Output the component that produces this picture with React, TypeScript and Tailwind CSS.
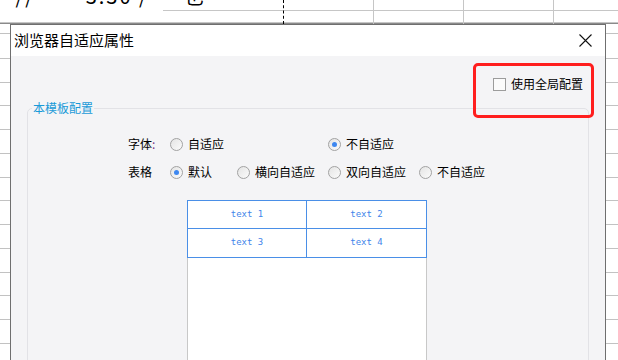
import React from "react";

const hLinesSide = [33, 58, 82, 105, 129, 153, 177, 200, 224, 248, 272, 295, 319, 343];

function Radio({ checked }: { checked?: boolean }) {
  return (
    <span className="relative flex h-[13px] w-[13px] shrink-0 items-center justify-center rounded-full border border-[#a2a2a2] bg-gradient-to-br from-[#e4e4e4] to-[#fbfbfb]">
      {checked && <span className="h-[5px] w-[5px] rounded-full bg-[#3d87f0]" />}
    </span>
  );
}

function Opt({ label, checked, w }: { label: string; checked?: boolean; w: string }) {
  return (
    <div className={`flex items-center gap-[5px] ${w}`}>
      <Radio checked={checked} />
      <span>{label}</span>
    </div>
  );
}

export default function App() {
  const font = { fontFamily: '"Noto Sans CJK SC", "Noto Sans", sans-serif' };
  return (
    <div className="relative h-[360px] w-[618px] overflow-hidden bg-white" style={font}>
      {/* background spreadsheet */}
      <div className="absolute left-[10px] top-[-14px] text-[20px] leading-none text-black tracking-[2px]">
        <span>ʼ//·· 3.30 / · 也</span>
      </div>
      <div className="absolute left-[163px] right-0 top-[10px] h-px bg-[#c6c6c6]" />
      <div className="absolute left-0 right-0 top-[22px] h-px bg-[#c6c6c6]" />
      <div className="absolute left-0 right-0 top-[23px] h-px bg-[#8a8a8a]" />
      <div className="absolute top-0 h-[24px] left-[283px] w-px border-l border-dashed border-black" />
      <div className="absolute top-0 h-[24px] left-[373px] w-px bg-[#c6c6c6]" />
      <div className="absolute top-0 h-[24px] left-[463px] w-px bg-[#c6c6c6]" />
      <div className="absolute top-0 h-[24px] left-[553px] w-px bg-[#c6c6c6]" />
      {hLinesSide.map((y) => (
        <div key={y} className="absolute left-0 right-0 h-px bg-[#c2c2c2]" style={{ top: y }} />
      ))}

      {/* dialog window */}
      <div className="absolute left-[10px] top-[24px] flex h-[360px] w-[596px] flex-col border border-[#6f6f6f] bg-[#f4f4f6]">
        <div className="flex h-[31px] shrink-0 items-center justify-between bg-white pl-[3px] pr-[13px]">
          <span className="text-[15px] text-black">浏览器自适应属性</span>
          <svg width="13" height="13" viewBox="0 0 13 13">
            <path d="M0.5 0.5 L12.5 12.5 M12.5 0.5 L0.5 12.5" stroke="#111" strokeWidth="1.1" />
          </svg>
        </div>
        <div className="flex flex-col px-[16px] pt-[21px] text-[12px] text-black">
          <div className="flex h-[14px] items-center justify-end gap-[5px] pr-[6px]">
            <span className="h-[13px] w-[13px] border border-[#9c9c9c] bg-[#fbfbfb]" />
            <span>使用全局配置</span>
          </div>
          <fieldset className="mt-[8px] h-[300px] rounded-[5px] border border-[#e2e2e6] pl-[100px]">
            <legend className="ml-[-96px] px-[1px] text-[12px] text-[#1a9ad8]">本模板配置</legend>
            <div className="mt-[17px] flex h-[20px] items-center">
              <span className="w-[42px]">
                字体<span className="text-[#7b3a8c]">:</span>
              </span>
              <Opt label="自适应" w="w-[158px]" />
              <Opt label="不自适应" checked w="w-[100px]" />
            </div>
            <div className="mt-[8px] flex h-[20px] items-center">
              <span className="w-[42px]">表格</span>
              <Opt label="默认" checked w="w-[67px]" />
              <Opt label="横向自适应" w="w-[91px]" />
              <Opt label="双向自适应" w="w-[91px]" />
              <Opt label="不自适应" w="w-[70px]" />
            </div>
            <div className="ml-[59px] mt-[18px] h-[170px] w-[240px] border border-[#c8c8c8] bg-white">
              <div
                className="mt-[-1px] ml-[-1px] grid w-[240px] grid-cols-2 text-[9px] text-[#3f85ea]"
                style={{ fontFamily: '"DejaVu Sans Mono", "Liberation Mono", monospace' }}
              >
                {["text 1", "text 2", "text 3", "text 4"].map((t, i) => (
                  <div
                    key={t}
                    className={`flex h-[29px] items-center justify-center border-[#4a8fe7] ${
                      i === 0 ? "border" : i === 1 ? "border-y border-r" : i === 2 ? "border-x border-b" : "border-r border-b"
                    }`}
                  >
                    {t}
                  </div>
                ))}
              </div>
            </div>
          </fieldset>
        </div>
      </div>

      {/* red annotation box */}
      <div className="absolute left-[473px] top-[63px] h-[55px] w-[121px] rounded-[5px] border-[3px] border-[#ff1e1e]" />
    </div>
  );
}
